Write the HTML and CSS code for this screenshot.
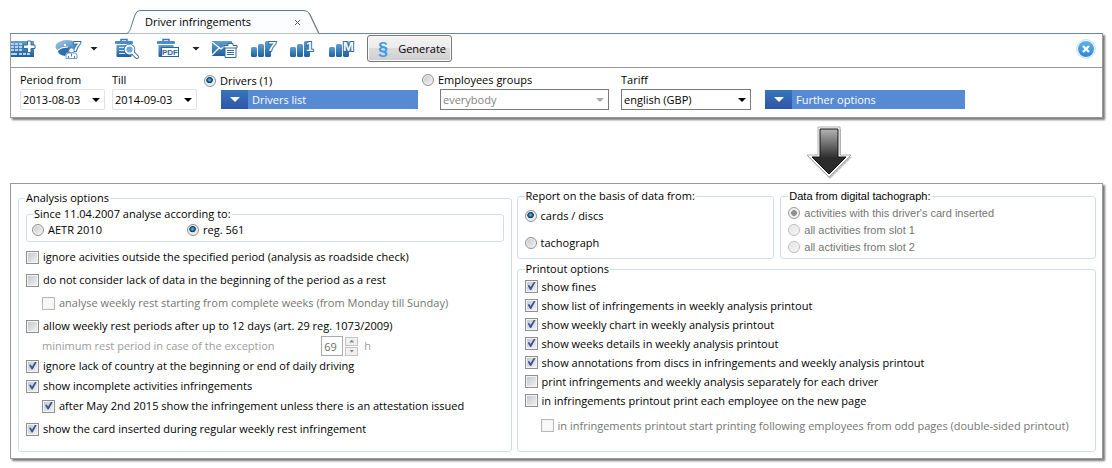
FILE: index.html
```
<!DOCTYPE html>
<html lang="en">
<head>
  <meta charset="UTF-8">
  <meta name="viewport" content="width=device-width, initial-scale=1.0">
  <title>Driver infringements</title>
  <link rel="stylesheet" href="styles.css">
</head>
<body>
  <!-- shared gradients and shapes for the toolbar icons -->
  <svg class="defs" width="0" height="0" aria-hidden="true">
    <defs>
      <linearGradient id="blue" x1="0" y1="0" x2="0" y2="1">
        <stop offset="0" stop-color="#5f9fd4"/>
        <stop offset="1" stop-color="#1f5f9f"/>
      </linearGradient>
      <linearGradient id="pale" x1="0" y1="0" x2="1" y2="1">
        <stop offset="0" stop-color="#a9cdea"/>
        <stop offset="1" stop-color="#2f74b3"/>
      </linearGradient>
      <linearGradient id="sky" x1="0" y1="0" x2="0" y2="1">
        <stop offset="0" stop-color="#5fb4ee"/>
        <stop offset="1" stop-color="#2f86d2"/>
      </linearGradient>
      <linearGradient id="dark" x1="0" y1="0" x2="0" y2="1">
        <stop offset="0" stop-color="#b4b4b4"/>
        <stop offset="0.65" stop-color="#2c2c2c"/>
        <stop offset="1" stop-color="#2c2c2c"/>
      </linearGradient>
      <g id="bars">
        <rect x="1" y="9" width="6" height="10" rx="1.500" fill="url(#blue)"/>
        <rect x="8" y="6" width="6" height="13" rx="1.500" fill="url(#blue)"/>
        <rect x="15" y="3" width="6" height="16" rx="1.500" fill="url(#blue)"/>
      </g>
      <g id="bin">
        <path d="M7 3V1.500h6V3" fill="none" stroke="#3c78b4" stroke-width="1.500"/>
        <rect x="1" y="3" width="18" height="3" rx="1" fill="#4a8cc6"/>
        <path d="M2.500 7h15v11q0 1-1 1h-13q-1 0-1-1z" fill="url(#blue)"/>
      </g>
    </defs>
  </svg>

  <div class="tab">
    <svg class="tab-shape" width="194" height="24" viewBox="0 0 194 24" aria-hidden="true">
      <path d="M0 23.500C3 23.500 4 20 5 17L9 5Q10.500 .5 14 .5H178Q182 .5 184 4.500L193 23.500" fill="#fcfdff" stroke="#5c7897"/>
      <path d="M183 3L192.500 23" fill="none" stroke="#777" stroke-opacity=".5" stroke-width="1.500"/>
    </svg>
    <span class="tab-title">Driver infringements</span>
    <button class="tab-close" aria-label="Close tab">
      <svg width="7" height="7" viewBox="0 0 7 7"><path d="M1 1l5 5M6 1l-5 5" stroke="#555" fill="none"/></svg>
    </button>
  </div>

  <section class="panel top-panel">
    <div class="toolbar">
      <div class="tools">
        <button class="tool" aria-label="Add to table">
          <svg width="28" height="22" viewBox="0 0 28 22">
            <rect x="0" y="3" width="23" height="16" fill="url(#blue)"/>
            <path d="M0 5h3v2H0zM4 5h3v2H4zM8 5h3v2H8zM0 8h3v2H0zM4 8h3v2H4zM8 8h3v2H8zM0 11h3v2H0zM4 11h3v2H4zM8 11h3v2H8zM0 15h6v2H0zM8 15h3v2H8zM12 15h3v2h-3zM16 15h3v2h-3z" fill="#b9d2ea"/>
            <path d="M16.500 3h3.500v4h4v3.500h-4v4h-3.500v-4h-4V7h4z" fill="#fff" stroke="#34699e"/>
          </svg>
        </button>
        <div class="split">
          <button class="tool" aria-label="Weekly driver analysis">
            <svg width="28" height="22" viewBox="0 0 28 22">
              <ellipse cx="13" cy="8.500" rx="11.500" ry="6.500" fill="url(#pale)"/>
              <path d="M4 13Q9 9 17 9.500L13 14l-2 4Q4 17 4 13z" fill="#2d70ad"/>
              <path d="M3 12.500Q8 8.500 14 9" fill="none" stroke="#fff"/>
              <circle cx="11" cy="7" r="1.200" fill="#fff"/>
              <text x="19" y="13" class="glyph slant seven">7</text>
              <circle cx="17.500" cy="12.500" r="2.600" fill="#fff" stroke="#4c83b8" stroke-width=".8"/>
              <path d="M12 20.500v-3q0-2.500 2.500-2.500h6q2.500 0 2.500 2.500v3z" fill="#fff" stroke="#4c83b8" stroke-width=".8"/>
              <path d="M17.500 15.500v3M14.500 18v2M20.500 18v2" stroke="#4c83b8"/>
            </svg>
          </button>
          <button class="caret-button" aria-label="More analyses"></button>
        </div>
        <button class="tool" aria-label="Preview deleted">
          <svg width="28" height="22" viewBox="0 0 28 22">
            <use href="#bin" x="1" y="0"/>
            <path d="M6 9.500h6M6 12.500h5M6 15.500h6" stroke="#d4e4f3"/>
            <path d="M19.500 14.500l4.500 4.500" stroke="#34699e" stroke-width="4" stroke-linecap="round"/>
            <circle cx="16.500" cy="11.500" r="4" fill="#6fa8d8" stroke="#34699e" stroke-width="3.400"/>
            <circle cx="16.500" cy="11.500" r="4" fill="#6fa8d8" stroke="#fff" stroke-width="1.800"/>
            <path d="M20 15l4 4" stroke="#fff" stroke-width="2.400" stroke-linecap="round"/>
          </svg>
        </button>
        <div class="split">
          <button class="tool" aria-label="Export to PDF">
            <svg width="28" height="22" viewBox="0 0 28 22">
              <use href="#bin" x="0" y="0"/>
              <rect x="5.500" y="9.500" width="17" height="9" fill="#fff" stroke="#2c649c"/>
              <text x="14" y="17" text-anchor="middle" class="pdf">PDF</text>
            </svg>
          </button>
          <button class="caret-button" aria-label="More export formats"></button>
        </div>
      </div>
      <button class="tool" aria-label="Send by mail">
        <svg width="28" height="22" viewBox="0 0 28 22">
          <rect x="1" y="3" width="20" height="15" fill="url(#blue)"/>
          <path d="M1 4l9 7 5-4M1 17l7-7" fill="none" stroke="#fff" stroke-width="1.300"/>
          <path d="M13 7.500h4v-2h5v2h4V10h-1v9.500H14V10h-1z" fill="#fff" stroke="#34699e"/>
          <path d="M14 10h11M16 12.500h7M16 14.500h7M16 16.500h7" stroke="#34699e"/>
        </svg>
      </button>
      <button class="tool" aria-label="Weekly chart">
        <svg width="28" height="22" viewBox="0 0 28 22"><use href="#bars"/><text x="18" y="13" class="glyph slant">7</text></svg>
      </button>
      <button class="tool" aria-label="Daily chart">
        <svg width="28" height="22" viewBox="0 0 28 22"><use href="#bars"/><text x="17" y="13" class="glyph">1</text></svg>
      </button>
      <button class="tool" aria-label="Monthly chart">
        <svg width="28" height="22" viewBox="0 0 28 22"><use href="#bars"/><text x="15" y="13" class="glyph">M</text></svg>
      </button>
      <button class="generate">
        <span class="paragraph">§</span>
        Generate
      </button>
      <button class="close" aria-label="Close">
        <svg width="20" height="20" viewBox="0 0 20 20">
          <circle cx="10" cy="10" r="9.300" fill="#fff" stroke="#bcdcf4"/>
          <circle cx="10" cy="10" r="8" fill="url(#sky)"/>
          <path d="M7 7l6 6M13 7l-6 6" stroke="#fff" stroke-width="2.400"/>
        </svg>
      </button>
    </div>

    <div class="filters">
      <div class="field date">
        <label for="from">Period from</label>
        <div class="drop soft"><select id="from"><option>2013-08-03</option></select></div>
      </div>
      <div class="field date">
        <label for="till">Till</label>
        <div class="drop soft"><select id="till"><option>2014-09-03</option></select></div>
      </div>
      <div class="field drivers">
        <label class="choice"><input type="radio" name="who" checked>Drivers (1)</label>
        <button class="expander">Drivers list</button>
      </div>
      <div class="field groups">
        <label class="choice"><input type="radio" name="who">Employees groups</label>
        <div class="drop"><select disabled aria-label="Employees group"><option>everybody</option></select></div>
      </div>
      <div class="field tariff">
        <label for="tariff">Tariff</label>
        <div class="drop"><select id="tariff"><option>english (GBP)</option></select></div>
      </div>
      <div class="field further">
        <button class="expander">Further options</button>
      </div>
    </div>
  </section>

  <svg class="arrow" width="48" height="56" viewBox="0 0 48 56" aria-hidden="true">
    <path d="M13 3h22v28h11L24 53 2 31h11z" fill="#777" opacity=".45" transform="translate(1 1)"/>
    <path d="M13 2h22v28h11L24 52 2 30h11z" fill="#fff" stroke="#999" stroke-width=".8"/>
    <path d="M15 4h18v28h8L24 49 7 32h8z" fill="url(#dark)" stroke="#111"/>
  </svg>

  <section class="panel options">
    <fieldset class="analysis">
      <legend>Analysis options</legend>
      <fieldset class="since">
        <legend>Since 11.04.2007 analyse according to:</legend>
        <label class="choice"><input type="radio" name="rule">AETR 2010</label>
        <label class="choice"><input type="radio" name="rule" checked>reg. 561</label>
      </fieldset>
      <label class="row"><input type="checkbox">ignore acivities outside the specified period (analysis as roadside check)</label>
      <label class="row spaced"><input type="checkbox">do not consider lack of data in the beginning of the period as a rest</label>
      <label class="row spaced nested off"><input type="checkbox" disabled>analyse weekly rest starting from complete weeks (from Monday till Sunday)</label>
      <label class="row spaced"><input type="checkbox">allow weekly rest periods after up to 12 days (art. 29 reg. 1073/2009)</label>
      <div class="row minimum">
        <label for="hours">minimum rest period in case of the exception</label>
        <div class="spinner">
          <input type="text" id="hours" value="69" disabled>
          <div class="steps">
            <button disabled aria-label="Increase"></button>
            <button class="down" disabled aria-label="Decrease"></button>
          </div>
          <span>h</span>
        </div>
      </div>
      <label class="row"><input type="checkbox" checked>ignore lack of country at the beginning or end of daily driving</label>
      <label class="row"><input type="checkbox" checked>show incomplete activities infringements</label>
      <label class="row nested"><input type="checkbox" checked>after May 2nd 2015 show the infringement unless there is an attestation issued</label>
      <label class="row spaced"><input type="checkbox" checked>show the card inserted during regular weekly rest infringement</label>
    </fieldset>

    <div class="right">
      <div class="sources">
        <fieldset class="basis">
          <legend>Report on the basis of data from:</legend>
          <label class="choice"><input type="radio" name="basis" checked>cards / discs</label>
          <label class="choice"><input type="radio" name="basis">tachograph</label>
        </fieldset>
        <fieldset class="digital">
          <legend>Data from digital tachograph:</legend>
          <label class="choice off"><input type="radio" name="slot" checked disabled>activities with this driver's card inserted</label>
          <label class="choice off"><input type="radio" name="slot" disabled>all activities from slot 1</label>
          <label class="choice off"><input type="radio" name="slot" disabled>all activities from slot 2</label>
        </fieldset>
      </div>
      <fieldset class="printout">
        <legend>Printout options</legend>
        <label class="row"><input type="checkbox" checked>show fines</label>
        <label class="row"><input type="checkbox" checked>show list of infringements in weekly analysis printout</label>
        <label class="row"><input type="checkbox" checked>show weekly chart in weekly analysis printout</label>
        <label class="row"><input type="checkbox" checked>show weeks details in weekly analysis printout</label>
        <label class="row"><input type="checkbox" checked>show annotations from discs in infringements and weekly analysis printout</label>
        <label class="row"><input type="checkbox">print infringements and weekly analysis separately for each driver</label>
        <label class="row"><input type="checkbox">in infringements printout print each employee on the new page</label>
        <label class="row nested off"><input type="checkbox" disabled>in infringements printout start printing following employees from odd pages (double-sided printout)</label>
      </fieldset>
    </div>
  </section>
</body>
</html>
```
FILE: styles.css
```
* {
  box-sizing: border-box;
}

body {
  margin: 0;
  padding: 10px 9px 8px 10px;
  background-color: #fff;
  color: #000;
  font-family: "Open Sans", "Noto Sans", sans-serif;
  font-size: 11px;
  line-height: 16px;
}

button,
input,
select {
  font: inherit;
  color: inherit;
  margin: 0;
  padding: 0;
}

button {
  border: none;
  background: none;
}

svg {
  display: block;
}

.defs {
  position: absolute;
}

/* tab */
.tab {
  position: relative;
  display: flex;
  align-items: center;
  justify-content: space-between;
  width: 194px;
  height: 24px;
  margin-left: 116px;
  margin-bottom: -1px;
  padding: 0 19px;
  z-index: 1;
}

.tab-shape {
  position: absolute;
  left: 0;
  top: 0;
}

.tab-title,
.tab-close {
  position: relative;
}

/* panels */
.panel {
  border: 1px solid #999;
  box-shadow: 2px 2px 2px #777;
  background-color: #fff;
}

.top-panel {
  border-top-color: #6a85a8;
}

.toolbar {
  display: flex;
  align-items: center;
  gap: 11px;
  height: 34px;
  padding-right: 6px;
  padding-bottom: 4px;
  border-bottom: 1px solid #999;
}

.tools {
  display: flex;
  gap: 15px;
}

.split {
  display: flex;
  align-items: center;
  gap: 8px;
}

.tool {
  width: 28px;
}

.caret-button {
  width: 8px;
  height: 4px;
  background-color: #222;
  clip-path: polygon(0 0, 100% 0, 50% 100%);
}

.glyph {
  font-family: "Liberation Sans", Arial, sans-serif;
  font-size: 13px;
  font-weight: bold;
  fill: #fff;
  stroke: #34699e;
  stroke-width: 2px;
  paint-order: stroke;
}

.slant {
  font-style: italic;
}

.seven {
  font-size: 12px;
}

.pdf {
  font-family: "Liberation Sans", Arial, sans-serif;
  font-size: 8px;
  font-weight: bold;
  fill: #2c649c;
}

.generate {
  display: flex;
  align-items: center;
  justify-content: space-between;
  width: 85px;
  height: 27px;
  padding: 0 5px 0 10px;
  border: 1px solid #777;
  border-radius: 3px;
  background: linear-gradient(#f3f3f3, #ebebeb 50%, #dcdcdc 50%, #cfcfcf);
  box-shadow: inset 0 0 0 1px #fafafa;
}

.paragraph {
  color: #3d9be6;
  font-family: "Liberation Sans", Arial, sans-serif;
  font-size: 18px;
  font-weight: bold;
}

.close {
  margin-left: auto;
}

/* filters */
.filters {
  display: flex;
  align-items: flex-end;
  height: 49px;
  padding: 0 9px 7px;
}

.field {
  display: flex;
  flex-direction: column;
}

.date {
  width: 85px;
  margin-right: 7px;
}

.drivers {
  width: 214px;
  padding-bottom: 1px;
}

.drivers .expander {
  margin-left: 17px;
}

.groups {
  width: 191px;
  padding-left: 4px;
}

.groups .drop {
  margin-left: 18px;
}

.tariff {
  width: 130px;
  margin: 0 14px 0 12px;
}

.further {
  width: 200px;
  padding-bottom: 1px;
}

.drop {
  position: relative;
  height: 21px;
  margin-top: 1px;
  border: 1px solid #7a7a7a;
}

.soft {
  border: 1px solid #dfe2e8;
  border-radius: 2px;
}

.drop select {
  display: block;
  width: 100%;
  height: 19px;
  padding: 0 2px;
  border: none;
  background: none;
  appearance: none;
}

.drop select:disabled {
  color: #848484;
  opacity: 1;
}

.drop::after {
  content: "";
  position: absolute;
  right: 4px;
  top: 8px;
  width: 8px;
  height: 4px;
  background-color: #000;
  clip-path: polygon(0 0, 100% 0, 50% 100%);
  pointer-events: none;
}

.groups .drop::after {
  background-color: #aaa;
}

.expander {
  position: relative;
  display: flex;
  align-items: center;
  height: 19px;
  margin-top: 1px;
  background-color: #568ad2;
  color: #fff;
}

.expander::before {
  content: "";
  width: 27px;
  height: 19px;
  margin-right: 4px;
  background: linear-gradient(#3676b9, #2f54a8);
}

.expander::after {
  content: "";
  position: absolute;
  left: 9px;
  top: 7px;
  width: 10px;
  height: 5px;
  background-color: #fff;
  clip-path: polygon(0 0, 100% 0, 50% 100%);
}

/* radios and check boxes */
.choice {
  display: flex;
  align-items: center;
  gap: 4px;
}

input[type="radio"] {
  flex: none;
  appearance: none;
  width: 12px;
  height: 12px;
  border: 1px solid #8e8f8f;
  border-radius: 50%;
  background: linear-gradient(135deg, #c4c7cb, #f4f4f4);
  box-shadow: inset 0 0 0 1px #f4f4f4;
}

input[type="radio"]:checked {
  background: radial-gradient(circle at 45% 40%, #6fd0f4 0, #1d6c9e 22%, #10304c 36%, #e4e8ec 44%);
}

input[type="radio"]:disabled {
  border-color: #bbb;
  background: linear-gradient(135deg, #e2e2e2, #f6f6f6);
}

input[type="radio"]:checked:disabled {
  border-color: #999;
  background: radial-gradient(circle, #999 0, #888 36%, #eee 44%);
}

input[type="checkbox"] {
  flex: none;
  position: relative;
  appearance: none;
  width: 13px;
  height: 13px;
  border: 1px solid #8e8f8f;
  background: linear-gradient(135deg, #c0c4cc, #f4f4f4);
  box-shadow: inset 0 0 0 1px #f4f4f4;
}

input[type="checkbox"]:checked::after {
  content: "";
  position: absolute;
  left: 2px;
  top: 1px;
  width: 8px;
  height: 8px;
  background-color: #3e5593;
  clip-path: polygon(0 45%, 20% 38%, 38% 62%, 78% 0, 100% 0, 46% 100%, 32% 100%);
}

input[type="checkbox"]:disabled {
  border-color: #b8b8b8;
  background: #f8f8f8;
}

.off {
  color: #757575;
}

/* options */
.arrow {
  margin: 7px 0 2px 795px;
}

.options {
  display: grid;
  grid-template-columns: 494fr 580fr;
  gap: 5px;
  padding: 4px 6px 6px 7px;
}

fieldset {
  min-width: 0;
  margin: 0;
  padding: 0 7px;
  border: 1px solid #d3dde6;
  border-radius: 3px;
}

legend {
  padding: 0 1px;
  line-height: 16px;
}

.analysis {
  margin-top: 2px;
  padding-bottom: 12px;
}

.analysis legend {
  margin-left: -1px;
}

.since {
  display: flex;
  height: 36px;
  margin-bottom: 5px;
  padding: 0 5px;
}

.since legend {
  margin-left: 1px;
}

.since .choice {
  width: 155px;
  height: 16px;
}

.row {
  display: flex;
  align-items: center;
  gap: 4px;
  height: 20px;
  white-space: nowrap;
}

.spaced {
  margin-top: 3px;
}

.nested {
  padding-left: 16px;
}

.minimum {
  justify-content: space-between;
  width: 345px;
  padding-left: 16px;
  color: #9c9c9c;
}

.spinner {
  display: flex;
  align-items: center;
  gap: 2px;
}

.spinner input {
  width: 22px;
  height: 20px;
  padding: 0 2px;
  border: 1px solid #aaa;
  background: #fff;
  color: #6d6d6d;
}

.spinner span {
  margin-left: 4px;
}

.steps {
  display: flex;
  flex-direction: column;
  gap: 1px;
}

.steps button {
  width: 13px;
  height: 9px;
  padding: 2px 3px;
  border: 1px solid #c4c4c4;
  background-color: #f0f0f0;
}

.steps button::before {
  content: "";
  display: block;
  width: 5px;
  height: 3px;
  background-color: #888;
  clip-path: polygon(50% 0, 100% 100%, 0 100%);
}

.steps .down::before {
  clip-path: polygon(0 0, 100% 0, 50% 100%);
}

.right {
  display: flex;
  flex-direction: column;
}

.sources {
  display: grid;
  grid-template-columns: 258fr 316fr;
  gap: 6px;
  height: 71px;
}

.basis .choice {
  height: 23px;
  margin-bottom: 4px;
}

.digital {
  font-family: "Liberation Sans", Arial, sans-serif;
}

.digital .choice {
  height: 17px;
}

.printout {
  flex: 1;
  margin-top: 2px;
}

.printout .row {
  height: 19px;
}

.printout .nested {
  margin-top: 6px;
}
```
